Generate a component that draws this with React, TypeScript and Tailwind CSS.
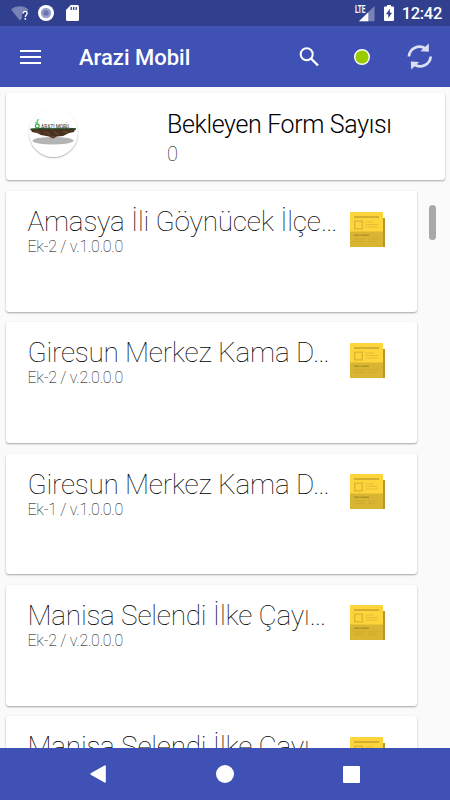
interface FormItem {
  title: string;
  version: string;
}

const forms: FormItem[] = [
  { title: 'Amasya İli Göynücek İlçe…', version: 'Ek-2 / v.1.0.0.0' },
  { title: 'Giresun Merkez Kama D…', version: 'Ek-2 / v.2.0.0.0' },
  { title: 'Giresun Merkez Kama D…', version: 'Ek-1 / v.1.0.0.0' },
  { title: 'Manisa Selendi İlke Çayı…', version: 'Ek-2 / v.2.0.0.0' },
  { title: 'Manisa Selendi İlke Çayı…', version: 'Ek-2 / v.2.0.0.0' },
];

export default function App() {
  return (
    <div className="flex h-[800px] w-[450px] flex-col overflow-hidden bg-[#fafafa] font-['Roboto',sans-serif] text-black">
      <StatusBar />
      <Toolbar />
      <main className="flex min-h-0 flex-1 flex-col overflow-hidden px-[5.5px] pt-[6px]">
        <SummaryCard />
        <div className="mt-[11px] flex min-h-0 flex-1 items-start justify-between">
          <div className="flex w-[411.5px] flex-col gap-[10.6px]">
            {forms.map((form, idx) => (
              <FormCard key={idx} form={form} />
            ))}
          </div>
          {/* Scrollbar thumb */}
          <div className="mt-[14px] mr-[8.5px] h-[35px] w-[7px] rounded-full bg-[#a8a8a8]" />
        </div>
      </main>
      <NavigationBar />
    </div>
  );
}

function StatusBar() {
  return (
    <header className="flex h-[26px] shrink-0 items-center justify-between bg-[#303f8e] pr-[8px] pl-[11px] text-white">
      <div className="flex items-center">
        <svg width="19" height="18" viewBox="0 0 19 18">
          <path d="M0 5.5C5 1.2 12.5 1.2 17.5 5.5L15.5 8H13L11 10.5V14.3L8.8 16.5Z" fill="#fff" opacity="0.35" />
          <path d="M12.2 9.4C12.4 6.6 16.2 6.7 16.1 9.3C16 11 14.3 10.9 14.3 13" fill="none" stroke="#fff" strokeWidth="1.4" />
          <rect x="13.5" y="14" width="1.6" height="1.7" fill="#fff" />
        </svg>
        <svg className="ml-[8px]" width="16" height="16" viewBox="0 0 16 16">
          <circle cx="8" cy="8" r="8" fill="#fff" />
          <circle cx="8" cy="8" r="5.2" fill="#98a0cb" />
          <circle cx="8" cy="8" r="2.8" fill="#6874b2" />
        </svg>
        <svg className="ml-[12px]" width="13" height="16" viewBox="0 0 13 16">
          <path d="M4.8 0H11.5Q13 0 13 1.5V14.5Q13 16 11.5 16H1.5Q0 16 0 14.5V5Z" fill="#fff" />
          <path d="M5.2 2V5M7.7 2V5M10.2 2V5" stroke="#303f8e" strokeWidth="1.3" />
        </svg>
      </div>
      <div className="flex items-center">
        <svg width="20" height="17" viewBox="0 0 20 17">
          <text x="0" y="8.4" fill="#fff" fontSize="10" fontWeight="700" fontFamily="Roboto" textLength="10.5" lengthAdjust="spacingAndGlyphs">LTE</text>
          <path d="M19.5 1V16.3H4Z" fill="#fff" opacity="0.35" />
          <path d="M13.3 7.2V16.3H4Z" fill="#fff" />
        </svg>
        <svg className="ml-[9px]" width="10" height="16" viewBox="0 0 10 16">
          <path d="M3 0H7V1.6H9Q10 1.6 10 2.6V15Q10 16 9 16H1Q0 16 0 15V2.6Q0 1.6 1 1.6H3Z" fill="#fff" />
          <path d="M5.8 3.8V7.8H8L4.3 13.2V9.3H2Z" fill="#303f8e" />
        </svg>
        <span className="ml-[8px] pt-[2px] text-[16.5px] leading-none font-medium tracking-[-0.3px]">12:42</span>
      </div>
    </header>
  );
}

function Toolbar() {
  return (
    <nav className="flex h-[61px] shrink-0 items-center bg-[#3f51b5] pr-[17px] pl-[20px] text-white">
      <div className="flex h-[14px] w-[21px] flex-col justify-between">
        <i className="h-[2px] bg-white" />
        <i className="h-[2px] bg-white" />
        <i className="h-[2px] bg-white" />
      </div>
      <h1 className="ml-[38px] flex-1 pt-[2px] text-[22px] leading-[30px] font-medium whitespace-nowrap">Arazi Mobil</h1>
      <svg width="20" height="20" viewBox="0 0 20 20">
        <circle cx="7.7" cy="7.2" r="6" fill="none" stroke="#fff" strokeWidth="2" />
        <path d="M12 11.5L19 18.5" stroke="#fff" strokeWidth="2.4" />
      </svg>
      <svg className="ml-[35px]" width="16" height="16" viewBox="0 0 16 16">
        <circle cx="8" cy="8" r="7.3" fill="#99cc00" stroke="#fff" strokeWidth="1.4" />
      </svg>
      <svg className="ml-[37px]" width="26" height="28" viewBox="0 0 26 28" opacity="0.82">
        <path d="M1.9 13.5A10.6 10.6 0 0 1 18.6 5.6" fill="none" stroke="#fff" strokeWidth="2.8" />
        <path d="M21.8 0.6V8.7L13.4 8.2Z" fill="#fff" />
        <path d="M23.7 13.5A10.6 10.6 0 0 1 7 21.4" fill="none" stroke="#fff" strokeWidth="2.8" />
        <path d="M4.2 26.6L3.8 18.5L12.2 19Z" fill="#fff" />
      </svg>
    </nav>
  );
}

function SummaryCard() {
  return (
    <section className="flex h-[87px] w-[439px] shrink-0 rounded-[3px] bg-white shadow-[0_1px_2px_rgba(0,0,0,0.35)]">
      <div className="mt-[15px] ml-[23.5px] size-[49px] rounded-full bg-white shadow-[0_1px_1.5px_rgba(0,0,0,0.3)]">
        <LogoArt />
      </div>
      <div className="ml-[89px] pt-[15px]">
        <p className="text-[25px] leading-[34px] font-light tracking-[-0.36px] whitespace-nowrap">Bekleyen Form Sayısı</p>
        <p className="text-[20px] leading-[24px] font-thin">0</p>
      </div>
    </section>
  );
}

// Floating slab of soil with the brand name standing on the grass
function LogoArt() {
  return (
    <svg width="49" height="49" viewBox="0 0 49 49">
      <ellipse cx="24" cy="32.8" rx="20.5" ry="3.8" fill="#b4b4b4" />
      <path d="M1.5 21L46.5 20.5L45 24L40 25L34 28L28 28.5L24 30.5L20 28.5L12 27L8 25L3 24Z" fill="#49301f" />
      <path d="M7 23L11 25M15 23.5L21 26.5M25 24L30 26.5M34 23.5L39 24.5M22 28L26 29" stroke="#6d4a31" strokeWidth="1.2" />
      <path d="M1.5 21.3L13 20.4L25 21L35 20.3L47 21" stroke="#244d1e" strokeWidth="1.4" fill="none" />
      <text x="12" y="20.5" fill="#566056" fontSize="6.5" fontWeight="500" fontFamily="Roboto" textLength="29" lengthAdjust="spacingAndGlyphs">ARAZİ MOBİL</text>
      <circle cx="8.3" cy="18" r="1.9" fill="none" stroke="#2eaf48" strokeWidth="1.2" />
      <path d="M8.3 16V11.4M6 14.4L8.2 15.2M8.2 12.6L9.7 11.4" stroke="#3ccf55" strokeWidth="1.1" />
    </svg>
  );
}

function FormCard({ form }: { form: FormItem }) {
  return (
    <article className="flex h-[120.7px] shrink-0 rounded-[3px] bg-white pl-[22px] shadow-[0_1px_2px_rgba(0,0,0,0.35)]">
      <div className="w-[322.5px] pt-[14px]">
        <h2 className="text-[28px] leading-[34px] font-thin tracking-[-0.24px] whitespace-nowrap">{form.title}</h2>
        <p className="text-[16px] leading-[16px] font-thin tracking-[-0.25px] whitespace-nowrap">{form.version}</p>
      </div>
      <NewspaperIcon />
    </article>
  );
}

function NewspaperIcon() {
  return (
    <svg className="mt-[20.5px]" width="35" height="35" viewBox="0 0 35 35">
      <path d="M32 6H35V35H31Z" fill="#b3982d" />
      <rect width="33" height="35" rx="0.5" fill="#fdd43a" />
      <rect y="19.5" width="33" height="15.5" fill="#d9b532" />
      <path d="M4 5H29" stroke="#cfac2e" strokeWidth="1.8" />
      <rect x="4.7" y="9.2" width="7.6" height="7.6" fill="none" stroke="#dab533" strokeWidth="1.3" />
      <path d="M15.5 10H23.5M15.5 12.5H28M15.5 15H28" stroke="#e4bd35" strokeWidth="1.1" />
      <path d="M4 23.3H9.5M10.5 23.3H19" stroke="#b0922b" strokeWidth="1.6" />
      <path d="M4 27H15M18 27H29M4 29.5H15M18 29.5H25" stroke="#cba92f" strokeWidth="0.9" />
    </svg>
  );
}

function NavigationBar() {
  return (
    <footer className="flex h-[52px] shrink-0 items-center justify-between bg-[#3f51b5] pr-[90px] pl-[90px]">
      <svg width="16" height="18" viewBox="0 0 16 18">
        <path d="M15.8 0.7V17.3L15 17.8L0.7 9.7Q0 9 0.7 8.3L15 0.2Z" fill="#fff" />
      </svg>
      <span className="size-[18px] rounded-full bg-white" />
      <span className="size-[17px] rounded-[1px] bg-white" />
    </footer>
  );
}
